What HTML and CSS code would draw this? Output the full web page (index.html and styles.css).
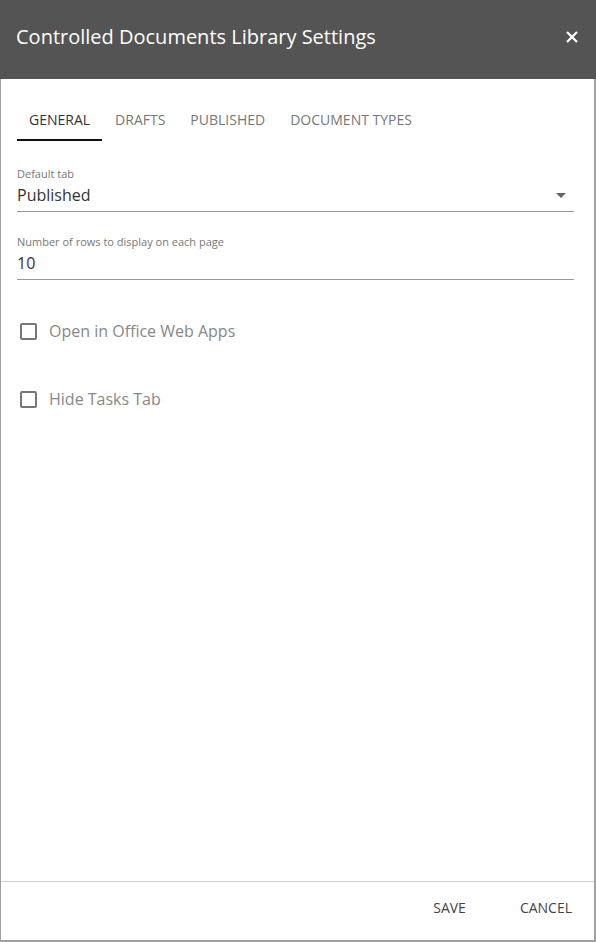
FILE: index.html
```html
<!DOCTYPE html>
<html>
<head>
<meta charset="utf-8">
<link rel="stylesheet" href="styles.css">
</head>
<body>
<div class="dialog">
  <header class="header">
    <h1 class="title">Controlled Documents Library Settings</h1>
    <svg class="close" width="12" height="12" viewBox="0 0 12 12"><path d="M1 1L11 11M11 1L1 11" stroke="#fff" stroke-width="2.2"/></svg>
  </header>
  <main class="content">
    <nav class="tabs">
      <span class="tab active">GENERAL</span>
      <span class="tab">DRAFTS</span>
      <span class="tab">PUBLISHED</span>
      <span class="tab">DOCUMENT TYPES</span>
    </nav>
    <div class="field first">
      <div class="label">Default tab</div>
      <div class="value select">Published<span class="arrow"></span></div>
    </div>
    <div class="field">
      <div class="label">Number of rows to display on each page</div>
      <div class="value">10</div>
    </div>
    <label class="check first-check"><span class="box"></span><span class="ctext">Open in Office Web Apps</span></label>
    <label class="check"><span class="box"></span><span class="ctext">Hide Tasks Tab</span></label>
  </main>
  <footer class="footer">
    <span class="btn">SAVE</span>
    <span class="btn">CANCEL</span>
  </footer>
</div>
</body>
</html>
```
FILE: styles.css
```css
html, body { margin: 0; padding: 0; }
body { width: 596px; height: 942px; font-family: "Open Sans", sans-serif; background: #fff; }
.dialog {
  box-sizing: border-box;
  width: 596px; height: 942px;
  border-left: 1px solid #a0a0a0;
  border-right: 2px solid #a0a0a0;
  border-bottom: 2px solid #a0a0a0;
  display: flex; flex-direction: column;
}
.header {
  height: 79px; background: #545454; margin-left: -1px; margin-right: -2px;
  display: flex; align-items: center; justify-content: space-between;
  padding: 0 18px 6px 16px; box-sizing: border-box;
}
.title { margin: 0; font-size: 20px; font-weight: 400; color: #fff; letter-spacing: 0; }
.close { margin-top: 1px; }
.content { flex: 1; padding: 0 20px 0 16px; }
.tabs { display: flex; margin-top: 23px; }
.tab { font-size: 14px; color: #777; padding: 8px 12px 10px; border-bottom: 2px solid transparent; margin-right: 1px; }
.tab.active { color: #333; border-bottom-color: #111; }
.field { border-bottom: 1px solid #999; padding-bottom: 4px; }
.field.first { margin-top: 26px; }
.field + .field { margin-top: 23px; }
.label { font-size: 11px; color: #777; line-height: 13px; }
.value { font-size: 16px; color: #333; line-height: 24px; margin-top: 3px; display: flex; justify-content: space-between; align-items: center; }
.arrow { width: 0; height: 0; border-left: 5px solid transparent; border-right: 5px solid transparent; border-top: 5px solid #666; margin-right: 8px; }
.check { display: flex; align-items: center; margin-left: 3px; height: 22px; }
.first-check { margin-top: 40px; }
.check + .check { margin-top: 46px; }
.box { box-sizing: border-box; width: 17px; height: 17px; border: 2px solid #777; border-radius: 2px; }
.ctext { font-size: 16px; color: #888; margin-left: 12px; }
.footer {
  height: 59px; border-top: 1px solid #d0d0d0; display: flex; justify-content: flex-end; align-items: center;
  padding-right: 22px; padding-bottom: 8px; gap: 54px; box-sizing: border-box;
}
.btn { font-size: 14px; color: #444; }
```
